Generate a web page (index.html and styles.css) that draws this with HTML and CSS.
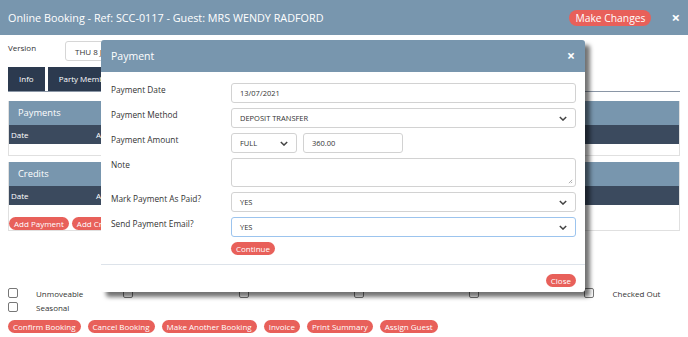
FILE: index.html
```html
<!DOCTYPE html>
<html lang="en">
<head>
  <meta charset="UTF-8">
  <title>Online Booking</title>
  <link rel="stylesheet" href="styles.css">
</head>
<body>
  <div class="topbar">
    <span class="title">Online Booking - Ref: SCC-0117 - Guest: MRS WENDY RADFORD</span>
    <div class="top-actions">
      <button class="pill big">Make Changes</button>
      <span class="x">&times;</span>
    </div>
  </div>

  <div class="content">
    <div class="version">
      <span class="version-label">Version</span>
      <div class="version-box">THU 8 JUL 2021</div>
    </div>

    <div class="tabs">
      <div class="tab">Info</div>
      <div class="tab">Party Members</div>
    </div>

    <div class="panel">
      <div class="panel-head">Payments</div>
      <div class="panel-cols"><span class="col-date">Date</span><span>Amount</span></div>
      <div class="panel-body short"></div>
    </div>

    <div class="panel">
      <div class="panel-head">Credits</div>
      <div class="panel-cols"><span class="col-date">Date</span><span>Amount</span></div>
      <div class="panel-body">
        <button class="pill">Add Payment</button>
        <button class="pill">Add Credit</button>
      </div>
    </div>

    <div class="checks">
      <label class="check"><span class="box"></span>Unmoveable</label>
      <label class="check"><span class="box"></span></label>
      <label class="check"><span class="box"></span></label>
      <label class="check"><span class="box"></span></label>
      <label class="check"><span class="box"></span></label>
      <label class="check"><span class="box"></span>Checked Out</label>
      <label class="check"><span class="box"></span>Seasonal</label>
    </div>

    <div class="actions">
      <button class="pill">Confirm Booking</button>
      <button class="pill">Cancel Booking</button>
      <button class="pill">Make Another Booking</button>
      <button class="pill">Invoice</button>
      <button class="pill">Print Summary</button>
      <button class="pill">Assign Guest</button>
    </div>
  </div>

  <!-- payment dialog -->
  <div class="modal">
    <div class="modal-head">
      <span>Payment</span>
      <span class="x small">&times;</span>
    </div>
    <div class="modal-body">
      <div class="row">
        <span class="lbl">Payment Date</span>
        <div class="field">13/07/2021</div>
      </div>
      <div class="row">
        <span class="lbl">Payment Method</span>
        <div class="field sel">DEPOSIT TRANSFER
          <svg viewBox="0 0 10 6"><path d="M1 1l4 4 4-4" /></svg>
        </div>
      </div>
      <div class="row">
        <span class="lbl">Payment Amount</span>
        <div class="pair">
          <div class="field sel amount-type">FULL
            <svg viewBox="0 0 10 6"><path d="M1 1l4 4 4-4" /></svg>
          </div>
          <div class="field amount">360.00</div>
        </div>
      </div>
      <div class="row">
        <span class="lbl">Note</span>
        <div class="field note">
          <svg class="grip" viewBox="0 0 6 6"><path d="M5 1L1 5M5 3.5L3.5 5" /></svg>
        </div>
      </div>
      <div class="row">
        <span class="lbl">Mark Payment As Paid?</span>
        <div class="field sel">YES
          <svg viewBox="0 0 10 6"><path d="M1 1l4 4 4-4" /></svg>
        </div>
      </div>
      <div class="row">
        <span class="lbl">Send Payment Email?</span>
        <div class="field sel focus">YES
          <svg viewBox="0 0 10 6"><path d="M1 1l4 4 4-4" /></svg>
        </div>
      </div>
      <div class="row">
        <span class="lbl"></span>
        <div class="btn-cell"><button class="pill">Continue</button></div>
      </div>
    </div>
    <div class="modal-foot">
      <button class="pill">Close</button>
    </div>
  </div>
</body>
</html>
```

FILE: styles.css
```css
* {
  margin: 0;
  padding: 0;
  box-sizing: border-box;
}

body {
  font-family: "Open Sans", "Liberation Sans", sans-serif;
  font-size: 8px;
  color: #333;
  background: white;
  width: 688px;
  height: 337px;
  overflow: hidden;
  position: relative;
}

.topbar {
  height: 35px;
  background: #7896ae;
  color: white;
  display: flex;
  justify-content: space-between;
  align-items: center;
  padding: 0 8px;
}

.title {
  font-size: 10.8px;
}

.top-actions {
  display: flex;
  align-items: center;
  gap: 20px;
  padding-right: 0;
}

.x {
  font-size: 15px;
  font-weight: bold;
  line-height: 1;
}

.x.small {
  font-size: 14px;
}

.pill {
  font-family: inherit;
  font-size: 8px;
  height: 13px;
  line-height: 13px;
  padding: 0 5px;
  color: white;
  background: #e8605a;
  border: none;
  border-radius: 7px;
  display: block;
}

.pill.big {
  font-size: 10.3px;
  height: 16px;
  line-height: 16px;
  border-radius: 8px;
  padding: 0 6px;
}

.content {
  padding: 0 8px;
}

.version {
  display: flex;
  align-items: flex-start;
  margin-top: 6px;
  height: 20px;
}

.version-label {
  width: 57px;
  padding-top: 1px;
}

.version-box {
  width: 130px;
  height: 20px;
  border: 1px solid #d6d6d6;
  border-radius: 3px;
  padding: 4px 9px;
}

.tabs {
  display: flex;
  gap: 3px;
  margin-top: 6px;
  border-bottom: 1px solid #8a96a6;
  height: 25px;
}

.tab {
  background: #2c3a4f;
  color: white;
  height: 24px;
  line-height: 24px;
  padding: 0 11px;
}

.panel {
  margin-top: 9px;
  border: 1px solid #e0e0e0;
  border-top: none;
}

.panel + .panel {
  margin-top: 6px;
}

.panel-head {
  background: #7896ae;
  color: white;
  font-size: 9.3px;
  height: 24px;
  line-height: 24px;
  padding-left: 9px;
}

.panel-cols {
  background: #3b4a5e;
  color: white;
  height: 19px;
  line-height: 19px;
  display: flex;
}

.col-date {
  width: 87px;
  padding-left: 2px;
}

.panel-body {
  height: 25px;
  padding-top: 12px;
  display: flex;
  gap: 3px;
}

.panel-body.short {
  height: 11px;
  padding: 0;
}

.checks {
  margin-top: 57px;
  display: grid;
  grid-template-columns: repeat(6, 115.3px);
  row-gap: 4px;
}

.check {
  display: flex;
  align-items: center;
  height: 10px;
}

.box {
  width: 10px;
  height: 10px;
  border: 1px solid #777;
  border-radius: 2px;
  margin-right: 18px;
}

.actions {
  display: flex;
  gap: 7px;
  margin-top: 8px;
}

.modal {
  position: absolute;
  left: 101px;
  top: 40px;
  width: 484px;
  height: 252px;
  background: white;
  border-radius: 3px;
  box-shadow: 5px 5px 4px rgba(0, 0, 0, 0.55);
}

.modal-head {
  background: #7896ae;
  color: white;
  height: 32px;
  border-radius: 3px 3px 0 0;
  display: flex;
  justify-content: space-between;
  align-items: center;
  padding: 0 10px;
  font-size: 10.5px;
}

.modal-body {
  padding: 11px 9px 9px 10px;
  display: flex;
  flex-direction: column;
  gap: 5px;
  border-bottom: 1px solid #dde3ea;
}

.row {
  display: grid;
  grid-template-columns: 120px 1fr;
}

.lbl {
  font-size: 8.3px;
  line-height: 12px;
  padding-top: 1px;
}

.btn-cell {
  display: flex;
}

.field {
  height: 20px;
  border: 1px solid #d2d2d2;
  border-radius: 3px;
  font-size: 7.5px;
  padding: 0 8px;
  display: flex;
  align-items: center;
  justify-content: space-between;
  position: relative;
}

.field svg {
  width: 8px;
  height: 5px;
  fill: none;
  stroke: #444;
  stroke-width: 1.8;
}

.field.focus {
  border-color: #9cc4ee;
}

.pair {
  display: flex;
  gap: 6px;
}

.amount-type {
  width: 66px;
}

.amount {
  width: 100px;
}

.field.note {
  height: 29px;
}

.grip {
  position: absolute;
  right: 2px;
  bottom: 2px;
}

.field .grip {
  width: 5px;
  height: 5px;
  stroke: #888;
  stroke-width: 0.8;
}

.modal-foot {
  display: flex;
  justify-content: flex-end;
  padding: 9px 9px 0;
}
```
